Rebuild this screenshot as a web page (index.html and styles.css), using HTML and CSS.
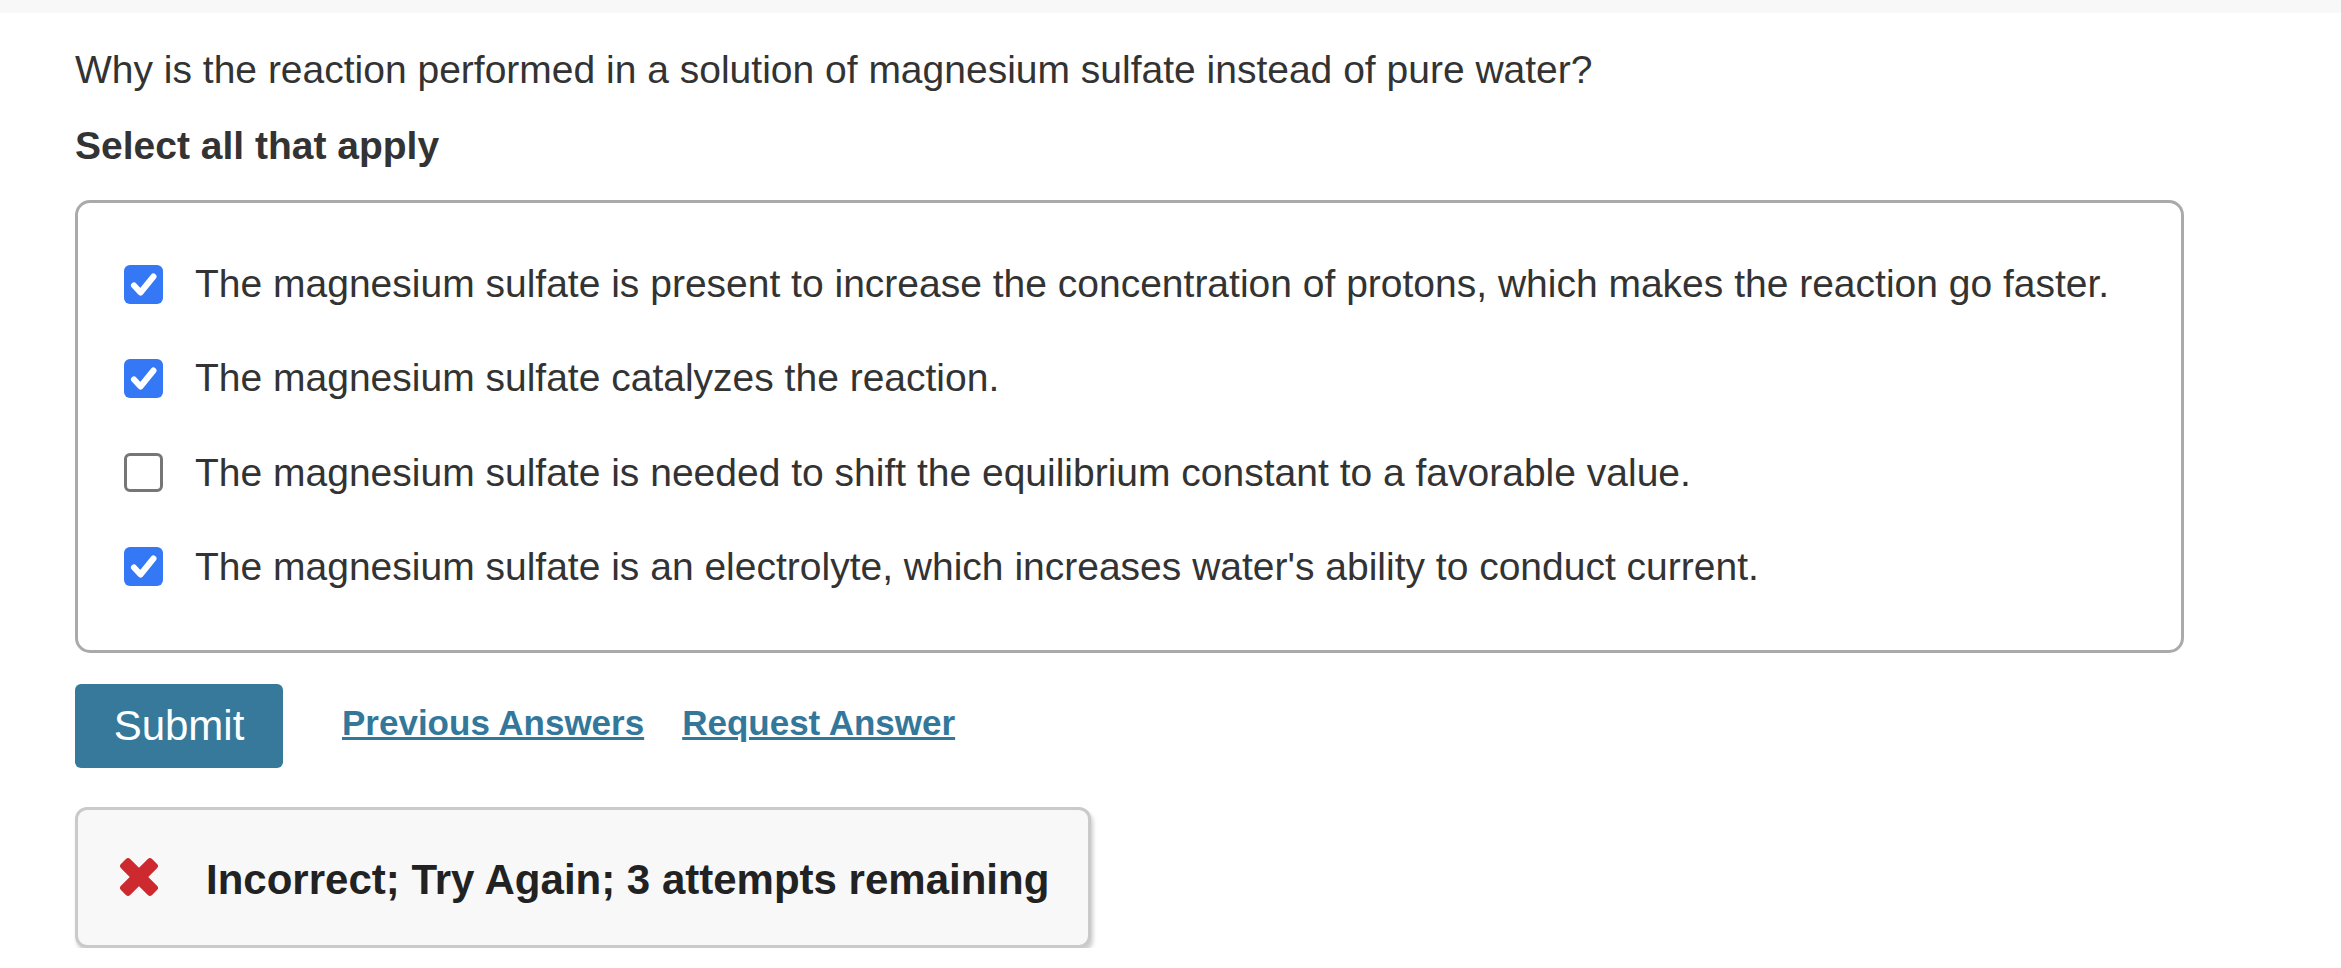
FILE: index.html
```html
<!DOCTYPE html>
<html lang="en">
<head>
<meta charset="utf-8">
<title>Question</title>
<link rel="stylesheet" href="styles.css">
</head>
<body>
<div class="topbar"></div>
<main class="main">
  <p class="question">Why is the reaction performed in a solution of magnesium sulfate instead of pure water?</p>
  <p class="instruction">Select all that apply</p>
  <div class="card">
    <label class="option">
      <span class="box checked"><svg viewBox="0 0 39 39" width="39" height="39"><polyline points="10,20.5 16.5,27.5 29.5,11.5" fill="none" stroke="#fff" stroke-width="6" stroke-linecap="round" stroke-linejoin="round"/></svg></span>
      <span class="opt-text">The magnesium sulfate is present to increase the concentration of protons, which makes the reaction go faster.</span>
    </label>
    <label class="option">
      <span class="box checked"><svg viewBox="0 0 39 39" width="39" height="39"><polyline points="10,20.5 16.5,27.5 29.5,11.5" fill="none" stroke="#fff" stroke-width="6" stroke-linecap="round" stroke-linejoin="round"/></svg></span>
      <span class="opt-text">The magnesium sulfate catalyzes the reaction.</span>
    </label>
    <label class="option">
      <span class="box"></span>
      <span class="opt-text">The magnesium sulfate is needed to shift the equilibrium constant to a favorable value.</span>
    </label>
    <label class="option">
      <span class="box checked"><svg viewBox="0 0 39 39" width="39" height="39"><polyline points="10,20.5 16.5,27.5 29.5,11.5" fill="none" stroke="#fff" stroke-width="6" stroke-linecap="round" stroke-linejoin="round"/></svg></span>
      <span class="opt-text">The magnesium sulfate is an electrolyte, which increases water's ability to conduct current.</span>
    </label>
  </div>
  <div class="actions">
    <button class="submit" type="button">Submit</button>
    <div class="links">
      <a class="link" href="#">Previous Answers</a>
      <a class="link" href="#">Request Answer</a>
    </div>
  </div>
  <div class="feedback">
    <svg class="xicon" viewBox="0 0 40 40" width="40" height="40">
      <rect x="13.5" y="-2" width="13" height="44" rx="3" fill="#cc2a2e" transform="rotate(45 20 20)"/>
      <rect x="13.5" y="-2" width="13" height="44" rx="3" fill="#cc2a2e" transform="rotate(-45 20 20)"/>
    </svg>
    <span class="feedback-text">Incorrect; Try Again; 3 attempts remaining</span>
  </div>
</main>
</body>
</html>
```
FILE: styles.css
```css
html, body {
  margin: 0;
  padding: 0;
  background: #fff;
}
body {
  font-family: "Liberation Sans", Arial, sans-serif;
  color: #333;
}
.topbar {
  height: 13px;
  background: #f8f8f8;
}
.main {
  padding: 34px 0 0 75px;
}
.question {
  margin: 0;
  font-size: 39px;
  line-height: 46px;
}
.instruction {
  margin: 30px 0 0;
  font-size: 39px;
  line-height: 46px;
  font-weight: bold;
}
.card {
  margin-top: 31px;
  width: 2109px;
  box-sizing: border-box;
  border: 3px solid #aaa;
  border-radius: 15px;
  padding: 58px 0 60px 46px;
  display: flex;
  flex-direction: column;
  gap: 48.3px;
}
.option {
  display: flex;
  align-items: center;
  gap: 32px;
  height: 46px;
  font-size: 39px;
  line-height: 46px;
}
.box {
  width: 39px;
  height: 39px;
  box-sizing: border-box;
  border-radius: 6px;
  border: 3px solid #767676;
  background: #fff;
  flex: none;
  display: flex;
}
.box.checked {
  border: none;
  background: #3478f6;
}
.actions {
  margin-top: 31px;
  display: flex;
  align-items: center;
}
.submit {
  width: 208px;
  height: 84px;
  border: none;
  border-radius: 6px;
  background: #36799a;
  color: #fff;
  font-family: "Liberation Sans", Arial, sans-serif;
  font-size: 42px;
  padding: 0;
}
.links {
  margin-left: 59px;
  margin-bottom: 5px;
  display: flex;
  gap: 38px;
}
.link {
  color: #33789a;
  font-weight: bold;
  font-size: 35px;
  line-height: 46px;
  text-decoration: underline;
  text-decoration-thickness: 3px;
}
.feedback {
  margin-top: 39px;
  display: inline-flex;
  align-items: center;
  height: 141px;
  box-sizing: border-box;
  border: 3px solid #cacaca;
  border-radius: 12px;
  background: #f8f8f8;
  box-shadow: 2px 4px 4px rgba(0, 0, 0, 0.2);
  padding: 0 39px 0 41px;
  gap: 47px;
}
.xicon {
  flex: none;
}
.feedback-text {
  font-weight: bold;
  font-size: 42px;
  color: #222;
  padding-top: 6px;
}
```
